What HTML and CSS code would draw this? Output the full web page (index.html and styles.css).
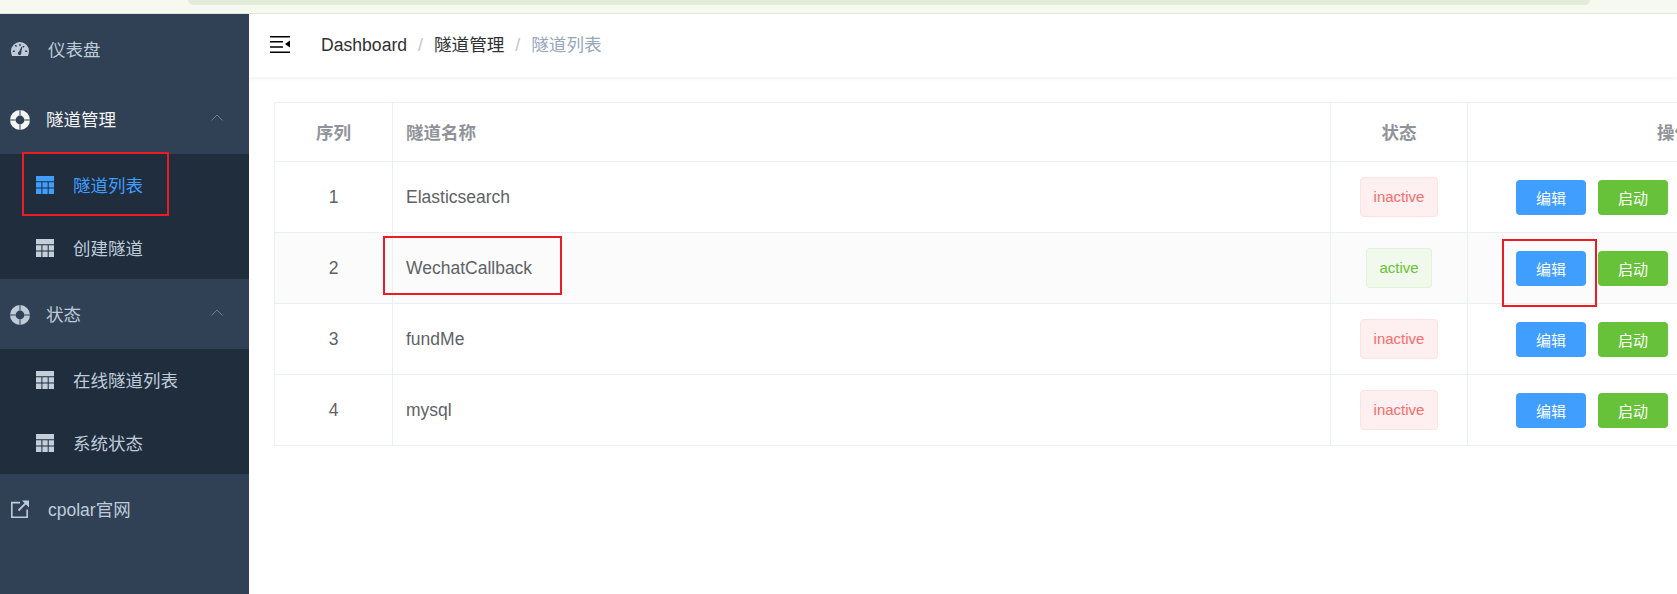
FILE: index.html
```html
<!DOCTYPE html>
<html lang="zh">
<head>
<meta charset="utf-8">
<title>隧道列表</title>
<link rel="stylesheet" href="styles.css">
</head>
<body>
<svg class="defs" width="0" height="0" aria-hidden="true">
  <symbol id="i-grid" viewBox="0 0 18 18">
    <path d="M0 0h18v5.2H0z M0 6.2h5.4v5.3H0z M6.400 6.200h5.300v5.300H6.400z M12.700 6.200H18v5.300h-5.300z M0 12.500h5.400V18H0z M6.400 12.500h5.300V18H6.400z M12.700 12.500H18V18h-5.300z"/>
  </symbol>
  <symbol id="i-ring" viewBox="0 0 20 20">
    <path fill-rule="evenodd" d="M10 0a10 10 0 1 1 0 20a10 10 0 0 1 0-20z M10 5.600a4.400 4.400 0 1 0 0 8.800a4.400 4.400 0 0 0 0-8.800z"/>
    <path class="ring-cut" d="M9.500 0h1v5.600h-1z M9.500 14.400h1V20h-1z M0 9.500h5.600v1H0z M14.400 9.500H20v1h-5.600z"/>
  </symbol>
  <symbol id="i-up" viewBox="0 0 12 7">
    <path d="M.5 6.500L6 1l5.500 5.500" fill="none" stroke="currentColor" stroke-width="1"/>
  </symbol>
</svg>

<div class="browser-strip"><div class="browser-pill"></div></div>

<div class="app">
  <nav class="sidebar">
    <a class="menu-item">
      <svg class="icon-gauge" viewBox="0 0 18 14"><path fill-rule="evenodd" d="M9 0a9 9 0 0 1 9 9c0 1.800-.4 3.500-1.100 5H1.100C.4 12.500 0 10.800 0 9a9 9 0 0 1 9-9z M8.300 2v2h1.400V2z M3.700 3.700l1.400 1.400 1-1-1.400-1.400z M12.300 3.700l-1 1 1 1 1.400-1.300z M1.800 8.500v1.400h2V8.500z M14.200 8.500v1.400h2V8.500z M10.400 4.800L8 9.800a1.700 1.700 0 1 0 2.200 1l1.100-5.800z"/></svg>
      <span class="label-a">仪表盘</span>
    </a>

    <a class="menu-item open">
      <svg class="icon-ring"><use href="#i-ring"/></svg>
      <span class="label-b">隧道管理</span>
      <svg class="chevron"><use href="#i-up"/></svg>
    </a>
    <div class="submenu">
      <a class="sub-item active"><svg class="icon-grid"><use href="#i-grid"/></svg><span class="sub-label">隧道列表</span></a>
      <a class="sub-item"><svg class="icon-grid"><use href="#i-grid"/></svg><span class="sub-label">创建隧道</span></a>
    </div>

    <a class="menu-item">
      <svg class="icon-ring"><use href="#i-ring"/></svg>
      <span class="label-b">状态</span>
      <svg class="chevron"><use href="#i-up"/></svg>
    </a>
    <div class="submenu">
      <a class="sub-item"><svg class="icon-grid"><use href="#i-grid"/></svg><span class="sub-label">在线隧道列表</span></a>
      <a class="sub-item"><svg class="icon-grid"><use href="#i-grid"/></svg><span class="sub-label">系统状态</span></a>
    </div>

    <a class="menu-item">
      <svg class="icon-link" viewBox="0 0 18 18"><path d="M9 2.600H.8v14.600h15.400V9.500" fill="none" stroke="currentColor" stroke-width="1.600"/><path d="M7.500 10.500L16.300 1.700" fill="none" stroke="currentColor" stroke-width="1.800"/><path d="M11 .5h7v7z"/></svg>
      <span class="label-a">cpolar官网</span>
    </a>
  </nav>

  <main class="main">
    <header class="navbar">
      <svg class="hamburger" viewBox="0 0 20 17"><path d="M0 0h20v1.500H0z M0 5h13v1.500H0z M0 10.200h13v1.500H0z M0 15.500h20V17H0z M20 4.500v7l-5-3.500z"/></svg>
      <ol class="crumbs">
        <li>Dashboard</li>
        <li class="sep">/</li>
        <li>隧道管理</li>
        <li class="sep">/</li>
        <li class="current">隧道列表</li>
      </ol>
    </header>

    <section class="content">
      <table class="tunnels">
        <colgroup>
          <col class="c-index"><col class="c-name"><col class="c-state"><col class="c-actions">
        </colgroup>
        <thead>
          <tr><th>序列</th><th class="left">隧道名称</th><th>状态</th><th>操作</th></tr>
        </thead>
        <tbody>
          <tr>
            <td>1</td><td class="left">Elasticsearch</td>
            <td><span class="tag danger">inactive</span></td>
            <td class="actions"><button class="btn primary">编辑</button><button class="btn success">启动</button></td>
          </tr>
          <tr class="hovered">
            <td>2</td><td class="left">WechatCallback</td>
            <td><span class="tag ok">active</span></td>
            <td class="actions"><button class="btn primary">编辑</button><button class="btn success">启动</button></td>
          </tr>
          <tr>
            <td>3</td><td class="left">fundMe</td>
            <td><span class="tag danger">inactive</span></td>
            <td class="actions"><button class="btn primary">编辑</button><button class="btn success">启动</button></td>
          </tr>
          <tr>
            <td>4</td><td class="left">mysql</td>
            <td><span class="tag danger">inactive</span></td>
            <td class="actions"><button class="btn primary">编辑</button><button class="btn success">启动</button></td>
          </tr>
        </tbody>
      </table>
    </section>
  </main>
</div>

<div class="mark mark-menu"></div>
<div class="mark mark-name"></div>
<div class="mark mark-edit"></div>
</body>
</html>
```
FILE: styles.css
```css
* { box-sizing: border-box; }

html, body {
  margin: 0;
  height: 594px;
  overflow: hidden;
  background: #fff;
  font-family: "Liberation Sans", "Noto Sans CJK SC", sans-serif;
}

.defs { position: absolute; }

.browser-strip {
  height: 14px;
  background: #f6f9ef;
  border-bottom: 1px solid #e1e7d6;
  padding-left: 188px;
}
.browser-pill {
  width: 1402px;
  height: 5px;
  background: #e3ecdb;
  border-radius: 0 0 14px 14px;
}

.app {
  display: flex;
  height: 580px;
}

/* sidebar */
.sidebar {
  flex: 0 0 249px;
  background: #304156;
  color: #bfcbd9;
  font-size: 17.500px;
}
.menu-item {
  height: 70px;
  display: flex;
  align-items: center;
}
.menu-item.open { color: #f4f4f5; }
.icon-gauge { width: 18px; height: 14px; margin-left: 11px; fill: currentColor; }
.icon-link { width: 18px; height: 18px; margin-left: 11px; fill: currentColor; }
.icon-ring { width: 20px; height: 20px; margin-left: 10px; margin-top: 1px; fill: currentColor; }
.ring-cut { fill: #304156; }
.label-a { margin-left: 19px; margin-top: -2px; }
.label-b { margin-left: 16px; margin-top: -2px; }
.chevron {
  width: 12px;
  height: 7px;
  margin-left: auto;
  margin-right: 26px;
  margin-top: -3px;
  color: #6f7c8c;
}
.submenu { background: #1f2d3d; }
.sub-item {
  height: 62.500px;
  display: flex;
  align-items: center;
  gap: 19px;
  padding-left: 36px;
}
.sub-label { margin-top: -1px; }
.sub-item.active { color: #409eff; }
.icon-grid { width: 18px; height: 18px; fill: currentColor; }
.sub-item:not(.active) .icon-grid { fill: #c3ced9; }

/* main */
.main {
  flex: 1;
  min-width: 0;
  overflow: hidden;
}
.navbar {
  height: 63px;
  display: flex;
  align-items: center;
  padding-left: 21px;
  box-shadow: 0 1px 4px rgba(0, 21, 41, .08);
}
.hamburger { width: 20px; height: 17px; margin-top: -3px; fill: #000; }
.crumbs {
  list-style: none;
  margin: -4px 0 0 31px;
  padding: 0;
  display: flex;
  align-items: baseline;
  font-size: 17.600px;
  color: #303133;
}
.crumbs .sep { color: #c0c4cc; margin: 0 11px; }
.crumbs .current { color: #97a8be; }

.content { padding: 25px 0 0 25px; }

.tunnels {
  border-collapse: collapse;
  table-layout: fixed;
  width: 1607px;
  font-size: 17.500px;
  color: #606266;
  border: 1px solid #ebeef5;
}
.c-index { width: 118px; }
.c-name { width: 938px; }
.c-state { width: 137px; }
.c-actions { width: 414px; }
.tunnels th, .tunnels td {
  border: 1px solid #ebeef5;
  text-align: center;
  padding: 0;
  vertical-align: middle;
}
.tunnels th {
  height: 59px;
  padding-bottom: 2px;
  color: #909399;
  font-weight: 700;
}
.tunnels td { height: 71px; }
.tunnels .hovered td { background: #fbfbfc; }
.tunnels .left { text-align: left; padding-left: 13px; }
.tunnels .actions { text-align: left; padding-left: 48px; }

.tag {
  display: inline-block;
  height: 40px;
  line-height: 38px;
  padding: 0 12.500px;
  font-size: 15px;
  border-radius: 4px;
  border: 1px solid;
}
.tag.danger { background: #fef0f0; border-color: #fde2e2; color: #f56c6c; }
.tag.ok { background: #f0f9eb; border-color: #e1f3d8; color: #67c23a; }

.btn {
  width: 70px;
  height: 35px;
  border: 0;
  border-radius: 4px;
  padding: 0;
  margin-right: 12px;
  color: #fff;
  font: inherit;
  font-size: 15px;
  vertical-align: middle;
}
.btn.primary { background: #409eff; }
.btn.success { background: #67c23a; }

/* red annotation boxes drawn over the screenshot */
.mark {
  position: absolute;
  border: 2px solid #ed1c24;
}
.mark-menu { left: 22px; top: 152px; width: 147px; height: 64px; }
.mark-name { left: 383px; top: 236px; width: 179px; height: 59px; }
.mark-edit { left: 1502px; top: 239px; width: 95px; height: 68px; }
```
